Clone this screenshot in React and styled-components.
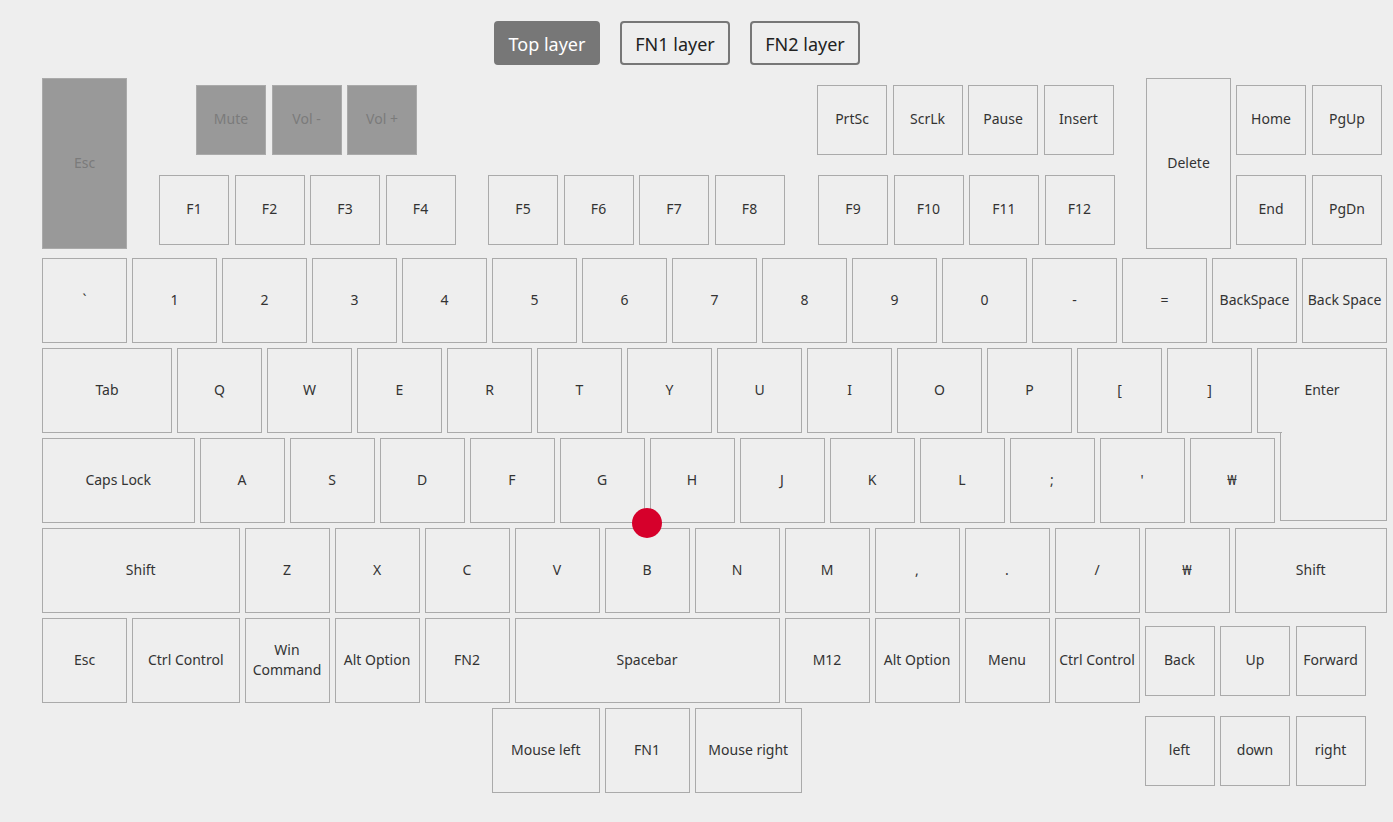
import React from 'react';
import styled, { createGlobalStyle } from 'styled-components';

const GlobalStyle = createGlobalStyle`
    html, body {
        margin: 0;
        padding: 0;
        background: #eeeeee;
    }
    body {
        font-family: "Noto Sans", "Open Sans", "Noto Sans CJK KR", sans-serif;
        color: #333;
    }
`;

const Page = styled.div`
    width: 1393px;
    height: 822px;
    background: #eeeeee;
    overflow: hidden;
    position: relative;
`;

const LayerBar = styled.div`
    display: flex;
    gap: 20px;
    padding: 21px 0 0 494px;
    height: 44px;
`;

const LayerButton = styled.button`
    height: 44px;
    width: ${props => props.w}px;
    box-sizing: border-box;
    border-radius: 4px;
    font-family: inherit;
    font-size: 18px;
    padding: 2px 0 0;
    cursor: pointer;
    background: ${props => props.active ? "#777" : "#eee"};
    color: ${props => props.active ? "#fff" : "#222"};
    border: 2px solid #777;
`;

const Board = styled.div`
    padding: 13px 0 0 42px;
    display: flex;
    flex-direction: column;
    gap: 9px;
`;

const TopSection = styled.div`
    display: flex;
    align-items: flex-start;
    height: 171px;
`;

const FBlock = styled.div`
    display: flex;
    flex-direction: column;
    gap: 20px;
    padding-top: 7px;
    margin-left: 32px;
`;

const FRow = styled.div`
    display: flex;
    gap: 5.5px;
`;

const Spacer = styled.div`
    width: ${props => props.w}px;
    flex-shrink: 0;
`;

const NavBlock = styled.div`
    display: grid;
    grid-template-columns: 70px 70px;
    column-gap: 6px;
    row-gap: 20px;
    padding-top: 7px;
    margin-left: 5px;
`;

const MainSection = styled.div`
    display: flex;
    flex-direction: column;
    gap: 5px;
`;

const Row = styled.div`
    display: flex;
    gap: 5px;
    align-items: flex-start;
`;

const BottomArea = styled.div`
    display: flex;
    gap: 5px;
`;

const BottomLeft = styled.div`
    display: flex;
    flex-direction: column;
    gap: 5px;
`;

const ArrowCluster = styled.div`
    display: grid;
    grid-template-columns: repeat(3, 70px);
    grid-auto-rows: 85px;
    column-gap: 5.5px;
    row-gap: 5px;
    align-items: center;
`;

const Key = styled.div`
    box-sizing: border-box;
    flex-shrink: 0;
    width: ${props => props.w}px;
    height: ${props => props.h || 85}px;
    margin-left: ${props => props.ml || 0}px;
    padding-bottom: 2px;
    border: 1px solid #aaa;
    background: ${props => props.dim ? "#999" : "#eee"};
    color: ${props => props.dim ? "#7b7b7b" : "#333"};
    font-size: 14px;
    line-height: 20px;
    display: flex;
    align-items: center;
    justify-content: center;
    text-align: center;
    white-space: pre-line;
    overflow: visible;
`;

const EnterTop = styled(Key)`
    border-bottom: none;
    position: relative;
    &::after {
        content: "";
        position: absolute;
        left: -1px;
        bottom: 0;
        width: 25px;
        height: 1px;
        background: #aaa;
    }
`;

const EnterBottom = styled(Key)`
    border-top: none;
    margin-top: -5px;
`;

const Cursor = styled.div`
    position: absolute;
    left: 632px;
    top: 508px;
    width: 30px;
    height: 30px;
    border-radius: 50%;
    background: #d6002b;
`;

const u = n => 90 * n - 5;

const SmallKey = ({ children, dim, ml }) => (
    <Key w={70} h={70} dim={dim} ml={ml}>{children}</Key>
);

const UnitRow = ({ keys }) => (
    <Row>
        {keys.map((k, i) => {
            const [label, size] = Array.isArray(k) ? k : [k, 1];
            return <Key key={i} w={u(size)}>{label}</Key>;
        })}
    </Row>
);

const row1 = ["`", "1", "2", "3", "4", "5", "6", "7", "8", "9", "0", "-", "=", "BackSpace", "Back Space"];
const row3 = [["Caps Lock", 1.75], "A", "S", "D", "F", "G", "H", "J", "K", "L", ";", "'", "₩"];
const row4 = [["Shift", 2.25], "Z", "X", "C", "V", "B", "N", "M", ",", ".", "/", "₩", ["Shift", 1.75]];
const row5 = [["Esc", 1], ["Ctrl Control", 1.25], ["Win\nCommand", 1], ["Alt Option", 1], ["FN2", 1], ["Spacebar", 3], ["M12", 1], ["Alt Option", 1], ["Menu", 1], ["Ctrl Control", 1]];

const App = () => {
    return (
        <Page>
            <GlobalStyle />
            <LayerBar>
                <LayerButton active w={106}>Top layer</LayerButton>
                <LayerButton w={110}>FN1 layer</LayerButton>
                <LayerButton w={110}>FN2 layer</LayerButton>
            </LayerBar>
            <Board>
                <TopSection>
                    <Key w={85} h={171} dim>Esc</Key>
                    <FBlock>
                        <FRow>
                            <Spacer w={31.5} />
                            <SmallKey dim>Mute</SmallKey>
                            <SmallKey dim>Vol -</SmallKey>
                            <SmallKey dim>Vol +</SmallKey>
                            <Spacer w={389} />
                            <SmallKey>PrtSc</SmallKey>
                            <SmallKey>ScrLk</SmallKey>
                            <SmallKey>Pause</SmallKey>
                            <SmallKey>Insert</SmallKey>
                        </FRow>
                        <FRow>
                            <SmallKey>F1</SmallKey>
                            <SmallKey>F2</SmallKey>
                            <SmallKey>F3</SmallKey>
                            <SmallKey>F4</SmallKey>
                            <SmallKey ml={27}>F5</SmallKey>
                            <SmallKey>F6</SmallKey>
                            <SmallKey>F7</SmallKey>
                            <SmallKey>F8</SmallKey>
                            <SmallKey ml={28}>F9</SmallKey>
                            <SmallKey>F10</SmallKey>
                            <SmallKey>F11</SmallKey>
                            <SmallKey>F12</SmallKey>
                        </FRow>
                    </FBlock>
                    <Key w={85} h={171} ml={31.5}>Delete</Key>
                    <NavBlock>
                        <SmallKey>Home</SmallKey>
                        <SmallKey>PgUp</SmallKey>
                        <SmallKey>End</SmallKey>
                        <SmallKey>PgDn</SmallKey>
                    </NavBlock>
                </TopSection>
                <MainSection>
                    <UnitRow keys={row1} />
                    <Row>
                        <Key w={u(1.5)}>Tab</Key>
                        {["Q", "W", "E", "R", "T", "Y", "U", "I", "O", "P", "[", "]"].map(k => (
                            <Key key={k} w={85}>{k}</Key>
                        ))}
                        <EnterTop w={u(1.5)}>Enter</EnterTop>
                    </Row>
                    <Row>
                        {row3.map((k, i) => {
                            const [label, size] = Array.isArray(k) ? k : [k, 1];
                            return <Key key={i} w={u(size)}>{label}</Key>;
                        })}
                        <EnterBottom w={u(1.25)} h={88} />
                    </Row>
                    <UnitRow keys={row4} />
                    <BottomArea>
                        <BottomLeft>
                            <UnitRow keys={row5} />
                            <Row>
                                <Key w={u(1.25)} ml={450}>Mouse left</Key>
                                <Key w={85}>FN1</Key>
                                <Key w={u(1.25)}>Mouse right</Key>
                            </Row>
                        </BottomLeft>
                        <ArrowCluster>
                            <SmallKey>Back</SmallKey>
                            <SmallKey>Up</SmallKey>
                            <SmallKey>Forward</SmallKey>
                            <SmallKey>left</SmallKey>
                            <SmallKey>down</SmallKey>
                            <SmallKey>right</SmallKey>
                        </ArrowCluster>
                    </BottomArea>
                </MainSection>
            </Board>
            <Cursor />
        </Page>
    );
};

export default App;
